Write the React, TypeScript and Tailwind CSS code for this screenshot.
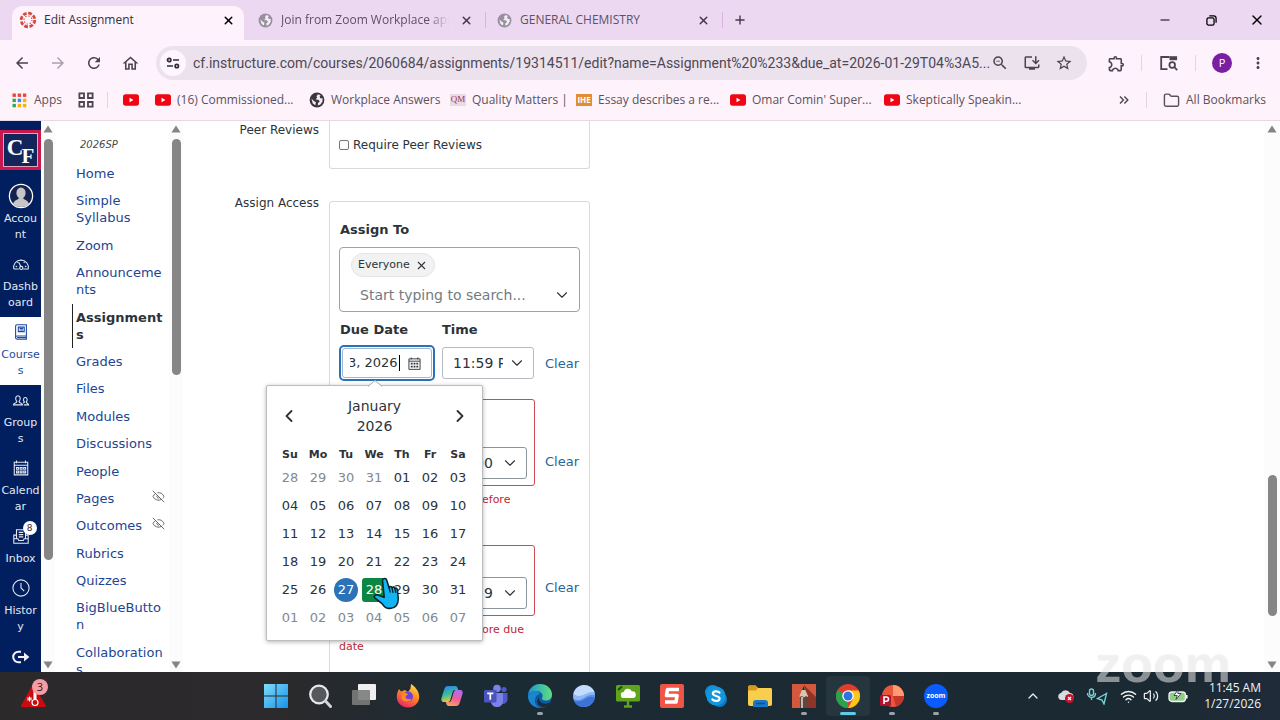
import type { ReactNode } from "react";
import { ChevronDown, ChevronLeft, ChevronRight, ChevronUp, EyeOff, Folder, Minus, Plus, Volume2, Wifi, X } from "lucide-react";
import {
  MdArrowBack,
  MdArrowForward,
  MdInstallDesktop,
  MdMoreVert,
  MdOutlineExtension,
  MdOutlineHome,
  MdRefresh,
  MdStarBorder,
  MdZoomOut,
} from "react-icons/md";

/* ---------- small icons ---------- */

function Globe({ className }: { className: string }) {
  return (
    <svg viewBox="0 0 16 16" className={className}>
      <circle cx="8" cy="8" r="7.4" fill="currentColor" />
      <path
        d="M9 2.2 L7.4 4.2 L8.2 5.6 L6.6 7.4 L9.4 7.8 L10.8 9.6 L9 11 L8.8 13.6 L11.4 12.4 L13.6 9.2 L13.4 6 L11.6 6.4 L10.6 4.8 L11.6 3.2 Z M2.4 6.6 L5 9.2 L6.8 10 L6.4 13.2 L3.8 11.6 Z"
        fill="#f6ecf8"
      />
    </svg>
  );
}

function YouTube() {
  return (
    <svg viewBox="0 0 16 16" className="size-4 shrink-0">
      <rect x="0" y="2.3" width="16" height="11.4" rx="2.6" fill="#f00514" />
      <path d="M6.5 5.8 L10.4 8 L6.5 10.2 Z" fill="#fff" />
    </svg>
  );
}

function CanvasRing() {
  return (
    <svg viewBox="0 0 18 18" className="size-[18px] shrink-0" fill="none" stroke="#d5483c">
      <circle cx="9" cy="9" r="6.8" strokeWidth="2.8" strokeDasharray="3.74 1.6" />
      <circle cx="9" cy="9" r="4" strokeWidth="1.2" strokeDasharray="1.2 1.94" />
    </svg>
  );
}

function AppsGrid() {
  const colors = ["#e04a3a", "#e04a3a", "#e04a3a", "#35a853", "#4285f4", "#f4b400", "#35a853", "#f4b400", "#f4b400"];
  return (
    <svg viewBox="0 0 15 15" className="size-[15px] shrink-0">
      {colors.map((c, i) => (
        <rect key={i} x={0.5 + (i % 3) * 5.2} y={0.5 + Math.floor(i / 3) * 5.2} width="3.4" height="3.4" fill={c} />
      ))}
    </svg>
  );
}

function FourSquares() {
  return (
    <svg viewBox="0 0 16 16" className="size-4 shrink-0" fill="none" stroke="#4b434f" strokeWidth="1.8">
      <path d="M1.4 1.4h4.6v4.6H1.4zM10 1.4h4.6v4.6H10zM1.4 10h4.6v4.6H1.4zM10 10h4.6v4.6H10z" />
    </svg>
  );
}

function SiteInfo() {
  return (
    <svg viewBox="0 0 14 14" className="size-[14px]" fill="none" stroke="#2f2a33" strokeWidth="1.7">
      <circle cx="3.2" cy="4" r="1.7" />
      <path d="M7 4h6M1 10h6" />
      <circle cx="10.8" cy="10" r="1.7" />
    </svg>
  );
}

function LensPanel() {
  return (
    <svg viewBox="0 0 20 18" className="h-[18px] w-5" fill="none" stroke="#4b434f" strokeWidth="1.8">
      <path d="M8.500 15.200H2.200V3h8.300" />
      <path d="M10.500 2.200h7.600v4h-7.600z" fill="#4b434f" stroke="none" />
      <circle cx="13.200" cy="11" r="2.800" />
      <path d="M15.200 13l3 3.200" />
    </svg>
  );
}

function Triangle({ up }: { up?: boolean }) {
  return (
    <svg viewBox="0 0 10 8" className="h-2 w-[10px] shrink-0">
      <path d={up ? "M5 0.4 L9.6 7.4 H0.4 Z" : "M5 7.4 L9.6 0.4 H0.4 Z"} fill="#858585" />
    </svg>
  );
}

function ScrollBar({ width, thumb }: { width: string; thumb: string }) {
  return (
    <div className={`flex shrink-0 flex-col items-center bg-[#fcfcfc] pt-1 pb-[3px] ${width}`}>
      <Triangle up />
      <div className="flex-1">
        <div className={thumb} />
      </div>
      <Triangle />
    </div>
  );
}

/* ---------- browser chrome ---------- */

function TabStrip() {
  return (
    <div className="flex h-10 items-stretch bg-[#ecd9f1] text-[12px] text-[#5d5165]">
      <div className="ml-3 mt-[6px] flex w-[232px] items-center rounded-t-[10px] bg-[#fef3fd] pl-[7px] pr-[9px] pb-[6px] text-[#34303a]">
        <CanvasRing />
        <span className="ml-[7px] flex-1">Edit Assignment</span>
        <button aria-label="Close Edit Assignment">
          <X size={13} strokeWidth={2.8} className="text-black" />
        </button>
      </div>
      <div className="flex w-[241px] items-center pl-[14px] pr-3">
        <Globe className="size-[15px] shrink-0 text-[#98909c]" />
        <span className="ml-2 w-[168px] overflow-hidden whitespace-nowrap [mask-image:linear-gradient(to_right,black_88%,transparent)]">
          Join from Zoom Workplace app
        </span>
        <button aria-label="Close Join from Zoom" className="ml-auto">
          <X size={13} strokeWidth={2.8} className="text-[#463a4d]" />
        </button>
      </div>
      <div className="flex w-[238px] items-center">
        <span className="h-4 w-px bg-[#d8b4e6]" />
        <Globe className="ml-[11px] size-[15px] shrink-0 text-[#98909c]" />
        <span className="ml-2">GENERAL CHEMISTRY</span>
        <button aria-label="Close General Chemistry" className="ml-auto mr-3">
          <X size={13} strokeWidth={2.8} className="text-[#463a4d]" />
        </button>
        <span className="h-4 w-px bg-[#d8b4e6]" />
      </div>
      <button aria-label="New tab" className="ml-[10px]">
        <Plus size={14} strokeWidth={2.4} className="text-[#463a4d]" />
      </button>
      <div className="ml-auto flex text-black">
        <button aria-label="Minimize" className="flex w-[46px] items-center justify-center">
          <Minus size={14} strokeWidth={1.8} />
        </button>
        <button aria-label="Restore" className="flex w-[46px] items-center justify-center">
          <svg viewBox="0 0 12 12" className="size-[11px]" fill="none" stroke="currentColor" strokeWidth="1.4">
            <rect x="1" y="3.2" width="7.8" height="7.8" rx="1.8" />
            <path d="M3.6 1h4.8a2.6 2.6 0 0 1 2.6 2.6v4.8" />
          </svg>
        </button>
        <button aria-label="Close window" className="flex w-[46px] items-center justify-center">
          <X size={16} strokeWidth={2} />
        </button>
      </div>
    </div>
  );
}

function Toolbar() {
  return (
    <div className="flex h-[46px] items-center bg-[#fef3fd] pr-[13px] text-[#4b434f]">
      <nav className="flex w-[156px] shrink-0 gap-[18px] pl-[13px]">
        <button aria-label="Back"><MdArrowBack size={18} /></button>
        <button aria-label="Forward"><MdArrowForward size={18} className="text-[#aaa1ae]" /></button>
        <button aria-label="Reload"><MdRefresh size={18} /></button>
        <button aria-label="Home"><MdOutlineHome size={19} /></button>
      </nav>
      <div className="flex h-[34px] flex-1 items-center rounded-full bg-[#ebe2ee] pl-1 pr-[14px]">
        <button aria-label="Site information" className="flex size-[26px] shrink-0 items-center justify-center rounded-full bg-[#fdf6fe]">
          <SiteInfo />
        </button>
        <input
          aria-label="Address"
          readOnly
          className="ml-[7px] min-w-0 flex-1 bg-transparent font-[Roboto,sans-serif] text-[14px] text-[#4f4755] outline-none"
          value="cf.instructure.com/courses/2060684/assignments/19314511/edit?name=Assignment%20%233&due_at=2026-01-29T04%3A5..."
        />
        <div className="flex shrink-0 gap-[14px]">
          <button aria-label="Zoom out"><MdZoomOut size={18} /></button>
          <button aria-label="Install"><MdInstallDesktop size={18} /></button>
          <button aria-label="Bookmark"><MdStarBorder size={18} /></button>
        </div>
      </div>
      <div className="ml-5 flex shrink-0 items-center">
        <button aria-label="Extensions"><MdOutlineExtension size={19} /></button>
        <span className="ml-[15px] h-4 w-px bg-[#e5d3ea]" />
        <button aria-label="Search with lens" className="ml-[17px]"><LensPanel /></button>
        <span className="ml-4 h-4 w-px bg-[#e5d3ea]" />
        <button className="ml-4 flex size-5 items-center justify-center rounded-full bg-[#7a1fa2] text-[11px] text-white">P</button>
        <button aria-label="Menu" className="ml-[17px]"><MdMoreVert size={18} /></button>
      </div>
    </div>
  );
}

const bookmarks: { label: string; width: string; icon: ReactNode }[] = [
  { label: "(16) Commissioned...", width: "w-[154px]", icon: <YouTube /> },
  { label: "Workplace Answers", width: "w-[141px]", icon: <Globe className="size-4 shrink-0 text-[#3a363c]" /> },
  {
    label: "Quality Matters |",
    width: "w-[126px]",
    icon: <span className="flex h-3 w-4 shrink-0 items-center justify-center bg-[#e7dce4] font-['Liberation_Serif',serif] text-[9px] text-[#a23350]">QM</span>,
  },
  {
    label: "Essay describes a re...",
    width: "w-[154px]",
    icon: <span className="flex h-3 w-4 shrink-0 items-center justify-center bg-[#e08d33] text-[8px] font-bold text-white">IHE</span>,
  },
  { label: "Omar Comin' Super...", width: "w-[154px]", icon: <YouTube /> },
  { label: "Skeptically Speakin...", width: "w-[154px]", icon: <YouTube /> },
];

function BookmarkBar() {
  return (
    <div className="flex h-[35px] items-center border-b border-[#e6d9e6] bg-[#fef3fb] pb-[6px] pl-3 pr-[14px] text-[12px] text-[#5a525e]">
      <a href="#" className="flex w-[66px] shrink-0 items-center gap-[7px]">
        <AppsGrid />
        Apps
      </a>
      <a href="#" aria-label="Tab groups" className="shrink-0">
        <FourSquares />
      </a>
      <span className="ml-[13px] h-4 w-px shrink-0 bg-[#e5d3ea]" />
      <a href="#" aria-label="YouTube" className="ml-[15px] mr-4 shrink-0">
        <YouTube />
      </a>
      {bookmarks.map((b) => (
        <a key={b.label} href="#" className={`flex shrink-0 items-center gap-[6px] whitespace-nowrap ${b.width}`}>
          {b.icon}
          {b.label}
        </a>
      ))}
      <button aria-label="More bookmarks" className="ml-auto">
        <svg viewBox="0 0 10 8" className="h-2 w-[10px]" fill="none" stroke="#4b434f" strokeWidth="1.4">
          <path d="M1 0.6 4.4 4 1 7.4M5.4 0.6 8.8 4 5.4 7.4" />
        </svg>
      </button>
      <span className="ml-[17px] h-4 w-px bg-[#e5d3ea]" />
      <a href="#" className="ml-4 flex items-center gap-[6px] whitespace-nowrap">
        <Folder size={17} />
        All Bookmarks
      </a>
    </div>
  );
}

/* ---------- canvas navigation ---------- */

function LineIcon({ children }: { children: ReactNode }) {
  return (
    <svg viewBox="0 0 20 20" className="size-[18px]" fill="none" stroke="currentColor" strokeWidth="1.2">
      {children}
    </svg>
  );
}

const globalNav: { lines: string[]; active?: boolean; badge?: string; icon: ReactNode }[] = [
  {
    lines: ["Accou", "nt"],
    icon: (
      <svg viewBox="0 0 26 26" className="size-[26px]">
        <circle cx="13" cy="13" r="11.6" fill="#14224f" stroke="#fff" strokeWidth="1.3" />
        <ellipse cx="13" cy="10" rx="4.6" ry="5.6" fill="#c6c6c6" />
        <path d="M5 21 C6 17 10 17 11 15 H15 C16 17 20 17 21 21 C17 25 9 25 5 21 Z" fill="#c6c6c6" />
      </svg>
    ),
  },
  {
    lines: ["Dashb", "oard"],
    icon: (
      <LineIcon>
        <path d="M2 15.5 A8.2 8.2 0 1 1 18 15.5 H12.5 M2 15.5 H7.5" />
        <circle cx="10.3" cy="14.4" r="1.8" />
        <path d="M9.6 12.6 7.6 8.4M4 12.5l1.6.4M6 7.8l1 1M10 5.2v1.6M14 7.8l-1 1M16 12.5l-1.6.4" />
      </LineIcon>
    ),
  },
  {
    lines: ["Course", "s"],
    active: true,
    icon: (
      <LineIcon>
        <path d="M4 16.2V3.6A1.6 1.6 0 0 1 5.6 2H16v12.5H5.6a1.7 1.7 0 0 0 0 3.4H16v-3.4M7 4.6h6.6v5H7zM8.4 6.2h4M8.4 7.8h4M5.6 16.2H16" />
      </LineIcon>
    ),
  },
  {
    lines: ["Group", "s"],
    icon: (
      <LineIcon>
        <path d="M1.6 15.4c0-2.6 3.8-1.6 3.8-3.8-2-2-1.8-6.4 1.2-6.4s3.2 4.4 1.2 6.4c0 2.2 3.8 1.2 3.8 3.8z" />
        <path d="M13.2 15.4h5.2c0-2.2-2.6-1.6-2.6-3.2 1.6-1.4 1.4-5-1-5s-2.6 3.6-1 5c0 .8-.8 1-1.6 1.2" />
      </LineIcon>
    ),
  },
  {
    lines: ["Calend", "ar"],
    icon: (
      <LineIcon>
        <path d="M2.5 3.6h15v14h-15zM2.5 7h15M5 1.6v3M15 1.6v3M5 9.4h2.2v2H5zM9 9.4h2.2v2H9zM13 9.4h2.2v2H13zM5 13.4h2.2v2H5zM9 13.4h2.2v2H9zM13 13.4h2.2v2H13z" />
      </LineIcon>
    ),
  },
  {
    lines: ["Inbox"],
    badge: "8",
    icon: (
      <LineIcon>
        <path d="M5 13V3h10v10M5 9H2v9h16V9h-3M2 13h4.5l1 2h5l1-2H18M7.5 6h5M7.5 8.5h5M7.5 11h5" />
      </LineIcon>
    ),
  },
  {
    lines: ["Histor", "y"],
    icon: (
      <LineIcon>
        <circle cx="10" cy="10" r="9" />
        <path d="M10 4.5V10l3.6 3.6" />
      </LineIcon>
    ),
  },
];

function GlobalNav() {
  return (
    <nav className="flex w-[41px] shrink-0 flex-col overflow-hidden bg-[#011f5f] font-['DejaVu_Sans',Verdana,sans-serif] text-[11px] leading-4 text-[#e3e8f2]">
      <a
        href="#"
        aria-label="College home"
        className="mb-[11px] mt-[9px] flex h-10 shrink-0 items-center justify-center border-[3px] border-[#c9184d] bg-[#13255b] font-['Liberation_Serif',serif] font-bold text-white outline outline-1 -outline-offset-4 outline-[#e6a5bb]"
      >
        <span className="pb-1 text-[23px]">C</span>
        <span className="-ml-[2px] pt-3 text-[21px]">F</span>
      </a>
      {globalNav.map((item) => (
        <a
          key={item.lines[0]}
          href="#"
          className={`flex shrink-0 flex-col items-center pb-[6px] pt-[3px] text-center ${item.active ? "bg-white text-[#1c4ba0]" : ""}`}
        >
          <span className="relative mb-[3px] flex h-6 items-center">
            {item.icon}
            {item.badge && (
              <span className="absolute -right-[7px] -top-[3px] flex size-[14px] items-center justify-center rounded-full bg-white text-[9px] text-[#333]">
                {item.badge}
              </span>
            )}
          </span>
          {item.lines.map((l) => (
            <span key={l}>{l}</span>
          ))}
        </a>
      ))}
      <button aria-label="Expand navigation" className="flex h-8 shrink-0 items-center justify-center">
        <svg viewBox="0 0 18 14" className="h-[14px] w-[18px]" fill="none" stroke="#f0f2f8" strokeWidth="2">
          <path d="M9 1.8H6.4a5.2 5.2 0 0 0 0 10.4H9M6 7h8" />
          <path d="M12 2.6 17.4 7 12 11.4Z" fill="#f0f2f8" stroke="none" />
        </svg>
      </button>
    </nav>
  );
}

const courseLinks: { lines: string[]; active?: boolean; hidden?: boolean }[] = [
  { lines: ["Home"] },
  { lines: ["Simple", "Syllabus"] },
  { lines: ["Zoom"] },
  { lines: ["Announceme", "nts"] },
  { lines: ["Assignment", "s"], active: true },
  { lines: ["Grades"] },
  { lines: ["Files"] },
  { lines: ["Modules"] },
  { lines: ["Discussions"] },
  { lines: ["People"] },
  { lines: ["Pages"], hidden: true },
  { lines: ["Outcomes"], hidden: true },
  { lines: ["Rubrics"] },
  { lines: ["Quizzes"] },
  { lines: ["BigBlueButto", "n"] },
  { lines: ["Collaboration", "s"] },
];

function CourseNav() {
  return (
    <aside className="w-[114px] shrink-0 overflow-hidden pl-[17px] pt-4 font-['DejaVu_Sans',Verdana,sans-serif]">
      <p className="pl-2 text-[10px] italic leading-4 text-[#4a4a4a]">2026SP</p>
      <ul className="mt-3 flex h-[513px] flex-col justify-between text-[13px] leading-[17px] text-[#1d4593]">
        {courseLinks.map((item) => (
          <li key={item.lines[0]} className="flex items-start justify-between pr-1">
            <a
              href="#"
              className={
                item.active
                  ? "-my-[5px] flex flex-col border-l border-[#222] py-[5px] pl-[3px] font-bold text-[#2d3339]"
                  : "flex flex-col pl-1"
              }
            >
              {item.lines.map((l) => (
                <span key={l}>{l}</span>
              ))}
            </a>
            {item.hidden && <EyeOff size={13} strokeWidth={1.6} className="text-[#555]" />}
          </li>
        ))}
      </ul>
    </aside>
  );
}

/* ---------- date picker ---------- */

const weekdays = ["Su", "Mo", "Tu", "We", "Th", "Fr", "Sa"];
const weeks = [
  ["28", "29", "30", "31", "01", "02", "03"],
  ["04", "05", "06", "07", "08", "09", "10"],
  ["11", "12", "13", "14", "15", "16", "17"],
  ["18", "19", "20", "21", "22", "23", "24"],
  ["25", "26", "27", "28", "29", "30", "31"],
  ["01", "02", "03", "04", "05", "06", "07"],
];

function dayClass(row: number, col: number) {
  if (row === 4 && col === 2) return "size-6 rounded-full bg-[#2b72b8] text-white";
  if (row === 4 && col === 3) return "size-6 rounded-[3px] bg-[#0b8743] text-white";
  if ((row === 0 && col < 4) || row === 5) return "size-6 text-[#83898e]";
  return "size-6 text-[#2d3339]";
}

function HandCursor() {
  return (
    <svg viewBox="0 0 26 33" className="absolute left-[106px] top-[191px] h-[33px] w-[26px]">
      <path
        d="M9.5 3.4C9.8 1 13.2 1 13.8 3.2L16 10.500C16.700 9 18.400 9.200 19 10.800C19.800 9.600 21.400 9.900 21.900 11.400C22.800 10.700 24 11.200 24.300 12.600L25.200 20.500C25.500 26 23.500 30.500 18 31.300C13.500 31.800 11 30 9.300 26.800L1.800 20.800C.6 19.200 2.400 17.400 4.600 18L11.200 20.200Z"
        fill="#12b4f2"
        stroke="#06202c"
        strokeWidth="1.5"
        strokeLinejoin="round"
      />
      <path d="M16 10.500l1.300 5M19 10.800l1.100 5M21.900 11.400l.9 4.500" stroke="#06202c" strokeWidth="1.3" fill="none" />
    </svg>
  );
}

function Calendar() {
  return (
    <div className="absolute -left-[73px] top-10 z-10 w-[217px] rounded-[2px] border border-[#bdbdbd] bg-white px-[9px] pb-2 pt-[10px] shadow-[0_1px_4px_rgba(0,0,0,0.3)]">
      <svg viewBox="0 0 14 7" className="absolute -top-[6px] left-[101px] h-[7px] w-[14px]">
        <path d="M0 6.5 7 .5l7 6" fill="#fff" stroke="#aaa" />
      </svg>
      <div className="flex items-center justify-between px-[3px] text-[14px] leading-5 text-[#2d3339]">
        <button aria-label="Previous month">
          <ChevronLeft size={20} strokeWidth={2.2} />
        </button>
        <span className="text-center">
          January
          <br />
          2026
        </span>
        <button aria-label="Next month">
          <ChevronRight size={20} strokeWidth={2.2} />
        </button>
      </div>
      <table className="mt-[10px] table-fixed border-collapse">
        <thead>
          <tr className="h-[18px] text-[11px] leading-4 text-[#2d3339]">
            {weekdays.map((d) => (
              <th key={d} className="w-7 p-0">
                {d}
              </th>
            ))}
          </tr>
        </thead>
        <tbody>
          {weeks.map((week, row) => (
            <tr key={row} className="h-7">
              {week.map((day, col) => (
                <td key={col} className="p-0 text-center">
                  <button className={`text-[13px] leading-6 ${dayClass(row, col)}`}>{day}</button>
                </td>
              ))}
            </tr>
          ))}
        </tbody>
      </table>
      <HandCursor />
    </div>
  );
}

/* ---------- assignment form ---------- */

function ClearButton({ className }: { className: string }) {
  return <button className={`ml-auto pr-px text-[13px] leading-4 text-[#2b6494] ${className}`}>Clear</button>;
}

type DateErrorProps = { id: string; value: string; box: string; clear: string; text: string; last?: string };

function DateError({ id, value, box, clear, text, last }: DateErrorProps) {
  return (
    <div>
      <div className="flex items-end">
        <div className={`flex w-[196px] items-end justify-end rounded-[3px] border border-[#cf4a52] pb-[6px] pr-[7px] ${box}`}>
          <div className="flex h-8 w-[92px] items-center rounded-[3px] border border-[#8d959c] pl-[39px] pr-[7px]">
            <input id={id} aria-label="Time" readOnly value={value} className="w-[24px] text-[14px] text-[#2d3339] outline-none" />
            <ChevronDown size={18} strokeWidth={1.5} className="ml-auto shrink-0" />
          </div>
        </div>
        <ClearButton className={clear} />
      </div>
      <p className="pt-[5px] text-[11px] leading-[17px] text-[#c02730]">
        <span className="block pl-[143px]">{text}</span>
        {last}
      </p>
    </div>
  );
}

function AssignForm() {
  return (
    <main className="grid min-w-0 flex-1 auto-rows-max grid-cols-[136px_261px] gap-x-[10px] overflow-hidden font-['DejaVu_Sans',Verdana,sans-serif] text-[12px] leading-4 text-[#2d3339]">
      <span className="pt-px text-right">Peer Reviews</span>
      <div className="h-12 rounded-b-[3px] border border-t-0 border-[#dadada] px-[9px] pt-4">
        <label className="flex items-center gap-1">
          <input type="checkbox" className="size-[10px] appearance-none rounded-[2px] border border-[#777] bg-white" />
          Require Peer Reviews
        </label>
      </div>

      <span className="pt-[26px] text-right">Assign Access</span>
      <div className="mt-8 rounded-[3px] border border-[#dadada] px-[9px] pb-10 pt-5">
        <label htmlFor="assignTo" className="block pl-px text-[13px] font-bold">
          Assign To
        </label>
        <div className="mt-[9px] h-[65px] rounded-[4px] border border-[#9ba2a8] pl-[11px] pr-2 pt-[5px]">
          <span className="inline-flex h-6 items-center gap-[5px] rounded-full border border-[#e4e4e4] bg-[#f2f2f2] px-[6px] text-[11px]">
            Everyone
            <button aria-label="Remove Everyone">
              <X size={13} strokeWidth={2} />
            </button>
          </span>
          <div className="flex items-center pl-[9px] pt-2">
            <input
              id="assignTo"
              placeholder="Start typing to search..."
              className="h-5 min-w-0 flex-1 text-[14px] outline-none placeholder:text-[#737b82]"
            />
            <ChevronDown size={18} strokeWidth={1.5} />
          </div>
        </div>

        <div className="mt-[10px] flex pl-px text-[13px] font-bold">
          <label htmlFor="dueDate" className="w-[102px]">
            Due Date
          </label>
          <label htmlFor="dueTime">Time</label>
        </div>
        <div className="mt-[7px] flex items-center">
          <div className="relative">
            <div className="h-9 w-[96px] rounded-[5px] border-2 border-[#2b72b8] p-px">
              <div className="flex h-full items-center rounded-[3px] border border-[#9cbad4] pl-[7px] pr-[10px]">
                <div className="flex w-[49px] justify-end overflow-hidden">
                  <input id="dueDate" readOnly value="3, 2026" className="w-[51px] shrink-0 text-[13px] outline-none" />
                </div>
                <span className="h-4 w-px bg-black" />
                <button aria-label="Open calendar" className="ml-auto shrink-0">
                  <svg viewBox="0 0 14 14" className="size-[13px]" fill="none" stroke="#2d3339">
                    <path d="M1 2h12v11.3H1zM1 4.5h12M3.5.5v2M10.5.5v2" />
                    <path d="M3 7.2h8M3 10.4h8" strokeWidth="2" strokeDasharray="2 1" />
                  </svg>
                </button>
              </div>
            </div>
            <Calendar />
          </div>
          <div className="ml-[7px] flex h-8 w-[92px] items-center rounded-[3px] border border-[#b4bac0] pl-[10px] pr-[7px]">
            <input id="dueTime" readOnly value="11:59 PM" className="w-[50px] text-[14px] outline-none" />
            <ChevronDown size={18} strokeWidth={1.5} className="ml-auto shrink-0" />
          </div>
          <ClearButton className="mt-[2px]" />
        </div>

        <div className="mt-[18px] flex flex-col gap-[37px]">
          <DateError id="fromTime" value="00" box="h-[87px]" clear="mb-4" text="efore" />
          <DateError id="untilTime" value="59" box="h-[71px]" clear="mb-5" text="ore due" last="date" />
        </div>
      </div>
    </main>
  );
}

/* ---------- taskbar ---------- */

const apps: { name: string; running?: boolean; active?: boolean; icon: ReactNode }[] = [
  {
    name: "Start",
    icon: (
      <>
        <defs>
          <linearGradient id="win" x1="0" y1="0" x2="1" y2="1">
            <stop offset="0" stopColor="#7fdcfb" />
            <stop offset="1" stopColor="#1593e8" />
          </linearGradient>
        </defs>
        <path d="M0 0h11.5v11.5H0zM12.5 0H24v11.5H12.5zM0 12.5h11.5V24H0zM12.5 12.5H24V24H12.5z" fill="url(#win)" />
      </>
    ),
  },
  {
    name: "Search",
    icon: (
      <>
        <circle cx="11" cy="10.5" r="8.8" fill="#55595e" stroke="#e9e9ea" strokeWidth="2.2" />
        <path d="M17.5 17l5 5.5" stroke="#d5d5d5" strokeWidth="3" strokeLinecap="round" />
      </>
    ),
  },
  {
    name: "Task view",
    icon: (
      <>
        <rect x="6" y="0" width="18" height="16" rx="1" fill="#efefef" />
        <rect x="0" y="6" width="18" height="15" rx="1" fill="#7b7b7b" opacity=".9" />
      </>
    ),
  },
  {
    name: "Firefox",
    icon: (
      <>
        <defs>
          <linearGradient id="fox" x1=".8" y1="0" x2=".3" y2="1">
            <stop offset="0" stopColor="#ffe14a" />
            <stop offset=".45" stopColor="#ff8a1e" />
            <stop offset="1" stopColor="#e8246b" />
          </linearGradient>
        </defs>
        <path d="M3 5l2 2.5L9 6l3 2 2.500-3.500L15 0c4 2.500 8 7 8.200 12.500C23.500 19 18 23.500 12 23.500S.8 19 .8 13c0-3 .8-6 2.200-8z" fill="url(#fox)" />
        <circle cx="12" cy="12.5" r="5" fill="#7440d8" />
        <path d="M6 10c2-1.500 5-1 6 .5-1.500.5-2 1.500-2.500 2.500 0 2 3 3 6 1.500-1 3.500-8 4.500-10 0z" fill="#ff8b25" />
      </>
    ),
  },
  {
    name: "Copilot",
    icon: (
      <>
        <defs>
          <linearGradient id="cpa" x1="0" y1="0" x2=".3" y2="1">
            <stop offset="0" stopColor="#2f7df5" />
            <stop offset=".6" stopColor="#35c29a" />
            <stop offset="1" stopColor="#f0c23a" />
          </linearGradient>
          <linearGradient id="cpb" x1=".6" y1="0" x2=".3" y2="1">
            <stop offset="0" stopColor="#b06bf5" />
            <stop offset=".5" stopColor="#ed5d9d" />
            <stop offset="1" stopColor="#f9a25a" />
          </linearGradient>
        </defs>
        <path d="M8 2h7c2 0 2.600 1.500 3.200 4h-3c-2 0-2.500 1.500-3 3.500l-2 6.500c-.5 1.500-1.500 2-3 2H4c-3 0-3-2.500-2.200-5l2.400-7.500C5 3 6 2 8 2z" fill="url(#cpa)" />
        <path d="M16 22H9c-2 0-2.600-1.500-3.200-4h3c2 0 2.500-1.500 3-3.500l2-6.500c.5-1.500 1.500-2 3-2H20c3 0 3 2.500 2.200 5l-2.400 7.500C19 21 18 22 16 22z" fill="url(#cpb)" />
      </>
    ),
  },
  {
    name: "Teams",
    icon: (
      <>
        <circle cx="13" cy="4.5" r="3.8" fill="#7b83eb" />
        <circle cx="20" cy="5.5" r="2.6" fill="#5059c9" />
        <path d="M15 9h8.500v6c0 4-3 5-5 5z" fill="#5059c9" />
        <path d="M7 9h12v8c0 4-3 6-6 6s-6-2-6-6z" fill="#7b83eb" />
        <rect x="0" y="6" width="12.5" height="12.5" rx="1.2" fill="#4b53bc" />
        <path d="M3.2 9.300h6.200M6.300 9.300v6.400" stroke="#fff" strokeWidth="1.7" />
      </>
    ),
  },
  {
    name: "Edge",
    running: true,
    icon: (
      <>
        <defs>
          <linearGradient id="edg" x1="0" y1=".3" x2="1" y2=".3">
            <stop offset="0" stopColor="#1d93d6" />
            <stop offset="1" stopColor="#5fe07a" />
          </linearGradient>
        </defs>
        <circle cx="12" cy="12" r="12" fill="#0f59a4" />
        <path d="M0 11C1 4 6 0 12 0c7 0 12 5 12 10.500 0 4-3 6-6 6-3.500 0-4.500-1.500-4-2.500C16 11 13 7 8.500 7 4 7 1 9 0 11z" fill="url(#edg)" />
        <path d="M8.500 7C4 7 1 9 0 12c0 7 6 12 12 12-5-2-6.500-7-4-11.500 1-1.500 2.500-2.500 4-2.500-1-2-2-3-3.500-3z" fill="#1b86d0" />
        <path d="M11 13c-1 4 3 7.500 8 6.500 1-.2 2.500-1 3-.5-1 .5-3 3.500-6 4-5 0-9-4-5-10z" fill="#1c2b33" />
      </>
    ),
  },
  {
    name: "Globe",
    icon: (
      <>
        <circle cx="12" cy="12" r="11" fill="#5a93ea" />
        <path d="M2 8C4 3 9 1 12 1c5 0 9 3 10.500 7-4 .5-6 1-9 3S6 14 1.500 10z" fill="#c3dcfb" />
        <path d="M1.200 10c4 3 8 2 11 .5s6-3 10.300-2.500l.4 3C18 10 15 12 12 14s-7 3-10.500 1z" fill="#8db8f6" />
        <path d="M2 17c4 1 7 .5 10-1.500s6-4 10.800-2C22.500 19 17 23 12 23s-8-2-10-6z" fill="#3d72d6" />
      </>
    ),
  },
  {
    name: "Cloud desktop",
    icon: (
      <>
        <rect x="0" y="1" width="24" height="16.5" rx="1.5" fill="#5ea51b" />
        <path d="M12 17v5M8 22.500h8" stroke="#5ea51b" strokeWidth="2.4" />
        <path d="M2 6l4-3.500" stroke="#1f4a08" strokeWidth="2" />
        <path d="M8 14a3 3 0 0 1-.3-6 4.300 4.300 0 0 1 8.200-.6A3.300 3.300 0 0 1 17 14z" fill="#fff" />
      </>
    ),
  },
  {
    name: "Snagit",
    icon: (
      <>
        <rect width="24" height="24" rx="2" fill="#ee5546" />
        <path d="M19 5.500H7.500l-1 6H17l-1 6.500H5" fill="none" stroke="#fff" strokeWidth="3.6" strokeLinejoin="round" />
      </>
    ),
  },
  {
    name: "Skype",
    icon: (
      <>
        <rect x="1" y="1" width="15" height="15" rx="7.5" fill="#0f8fd8" />
        <rect x="8" y="8" width="15" height="15" rx="7.5" fill="#0b7cc7" />
        <circle cx="12" cy="12" r="9.6" fill="#1296dc" />
        <path d="M15.500 8.600C14 7 8.800 6.800 8.800 9.600c0 3 6.800 1.800 6.800 5 0 3-5.600 3-7.200.8" fill="none" stroke="#fff" strokeWidth="2.2" strokeLinecap="round" />
      </>
    ),
  },
  {
    name: "File Explorer",
    icon: (
      <>
        <path d="M0 3.500C0 2 .8 1.500 2 1.500h5.500L10 4h12.500c1 0 1.500.6 1.500 1.500V20c0 1-.6 2-2 2H2c-1.200 0-2-.8-2-2z" fill="#f9cd4d" />
        <path d="M0 3.500C0 2 .8 1.500 2 1.500h5.500L10 4 8 6.500H0z" fill="#d99a1c" />
        <path d="M5 23v-4c0-2 1-3 3-3h9c2 0 3 1 3 3v4z" fill="#1978c8" />
        <path d="M8 19.500h9" stroke="#0e4f8c" strokeWidth="1.5" />
      </>
    ),
  },
  {
    name: "Sketchbook",
    running: true,
    icon: (
      <>
        <rect width="24" height="24" fill="#d4583d" />
        <path d="M12 1l12 12v11H14z" fill="#8f3527" />
        <path d="M11.500 2L16 12v12H7.500V12z" fill="#dcc5ae" />
        <path d="M11.500 2l1.500 4h-3z" fill="#222" />
        <path d="M7.500 13l2.500-1 2 1.500 2-1.500 2 1v11H7.500z" fill="#5d4743" />
        <path d="M10 13v11" stroke="#c9b6a8" strokeWidth="2" />
      </>
    ),
  },
  {
    name: "Chrome",
    active: true,
    icon: (
      <>
        <circle cx="12" cy="12" r="12" fill="#e23c2e" />
        <path d="M1.600 6L12 12l0 12A12 12 0 0 1 1.600 6z" fill="#2ba24c" />
        <path d="M12 6.500h10.700A12 12 0 0 1 12 24l5-9z" fill="#fcc61a" />
        <circle cx="12" cy="12" r="5.8" fill="#fff" />
        <circle cx="12" cy="12" r="4.5" fill="#2f72e4" />
      </>
    ),
  },
  {
    name: "PowerPoint",
    running: true,
    icon: (
      <>
        <circle cx="13" cy="12" r="11" fill="#e9573a" />
        <path d="M13 1a11 11 0 0 1 11 11H13z" fill="#ff9a72" />
        <path d="M24 12a11 11 0 0 1-8 10.500L13 12z" fill="#c8352b" />
        <rect x="0" y="11" width="11" height="11" rx="1.5" fill="#b3122c" />
        <path d="M4 20v-7h2.400a2.100 2.100 0 0 1 0 4.200H4" fill="none" stroke="#fff" strokeWidth="1.6" />
      </>
    ),
  },
  {
    name: "Zoom",
    running: true,
    icon: (
      <>
        <circle cx="12" cy="12" r="12" fill="#0b5cff" />
        <text x="12" y="14" textAnchor="middle" fontSize="7" fontWeight="bold" fill="#fff">
          zoom
        </text>
      </>
    ),
  },
];

function Taskbar() {
  return (
    <footer className="flex h-12 shrink-0 bg-[linear-gradient(to_right,#2c292b_0%,#2b2a2c_22%,#1b2b33_36%,#1b2a32_90%,#202a3a_100%)]">
      <div className="flex w-[254px] shrink-0 items-center pl-[21px]">
        <button aria-label="Weather alert" className="relative">
          <svg viewBox="0 0 26 24" className="h-6 w-[26px]">
            <path d="M12 2 L24 22 H1 Z" fill="#c80c12" stroke="#c80c12" strokeWidth="2" strokeLinejoin="round" />
            <path d="M14 6v11" stroke="#fff" strokeWidth="3" strokeLinecap="round" />
            <circle cx="14" cy="18.5" r="3" fill="#c80c12" stroke="#fff" strokeWidth="1.2" />
            <path d="M8.500 12.500v5M6 15h5M6.800 13.300l3.400 3.400M10.200 13.300l-3.400 3.400" stroke="#fff" />
          </svg>
          <span className="absolute -right-[1px] -top-[5px] flex size-4 items-center justify-center rounded-full bg-[#f79ba5] text-[11px] text-[#3a1518]">
            3
          </span>
        </button>
      </div>
      <div className="flex shrink-0">
        {apps.map((a) => (
          <button
            key={a.name}
            aria-label={a.name}
            className={`relative flex w-11 items-center justify-center ${a.active ? "my-1 rounded-[4px] bg-[#26363e]" : ""}`}
          >
            <svg viewBox="0 0 24 24" className="size-6">
              {a.icon}
            </svg>
            {a.running && <span className="absolute bottom-[5px] h-[3px] w-[6px] rounded-full bg-[#9aa2a7]" />}
            {a.active && <span className="absolute bottom-px h-[3px] w-4 rounded-full bg-[#5fcbe8]" />}
          </button>
        ))}
      </div>
      <div className="ml-auto flex items-center pr-[19px] text-[#f0f2f4]">
        <ChevronUp size={16} strokeWidth={1.8} />
        <svg viewBox="0 0 18 16" className="ml-4 h-4 w-[18px]">
          <path d="M4 12a3.600 3.600 0 0 1 0-7 5 5 0 0 1 9 0 3.600 3.600 0 0 1 1 7z" fill="#d9dbdd" />
          <circle cx="12.5" cy="10.5" r="4.5" fill="#c8102e" />
          <path d="M11 9l3 3M14 9l-3 3" stroke="#fff" strokeWidth="1.3" />
        </svg>
        <svg viewBox="0 0 22 18" className="ml-[11px] h-[18px] w-[22px]" fill="none" stroke="#74d3d3" strokeWidth="1.4">
          <rect x="3.5" y="2" width="4" height="6.5" rx="2" />
          <path d="M1.500 6c0 6 8 6 8 0M5.500 10.500v2.500M20.500 6.500l-9 5 4.500 1.500 2 4z" />
        </svg>
        <Wifi size={17} className="ml-3" />
        <Volume2 size={16} strokeWidth={1.8} className="ml-[6px]" />
        <svg viewBox="0 0 20 14" className="ml-[9px] h-[14px] w-5">
          <rect x="1" y="3" width="16.5" height="9.5" rx="3" fill="#8fce86" stroke="#f0f2f4" strokeWidth="1.3" />
          <path d="M18.800 6v3.500" stroke="#f0f2f4" strokeWidth="1.6" />
          <path d="M10.500 0L6 6.500h3.200L8 10.500l5-6H9.800z" fill="#fff" stroke="#1b2b33" strokeWidth=".8" />
        </svg>
        <div className="ml-4 pb-px text-right text-[12px] leading-4">
          11:45 AM
          <br />
          1/27/2026
        </div>
      </div>
    </footer>
  );
}

export default function App() {
  return (
    <div className="relative flex h-screen flex-col overflow-hidden bg-white font-['Open_Sans','Noto_Sans',sans-serif]">
      <header className="shrink-0">
        <TabStrip />
        <Toolbar />
        <BookmarkBar />
      </header>
      <div className="flex min-h-0 flex-1">
        <GlobalNav />
        <ScrollBar width="w-[14px]" thumb="mt-[6px] h-[421px] w-[9px] rounded-full bg-[#868686]" />
        <CourseNav />
        <ScrollBar width="w-[14px]" thumb="mt-[6px] h-[236px] w-[9px] rounded-full bg-[#868686]" />
        <AssignForm />
        <ScrollBar width="w-4" thumb="mt-[342px] h-[141px] w-[9px] rounded-full bg-[#868686]" />
      </div>
      <Taskbar />
      <div className="pointer-events-none absolute bottom-[30px] right-[49px] font-['Liberation_Sans',sans-serif] text-[52px] font-bold leading-[52px] text-white/50 [text-shadow:0_0_1px_rgba(0,0,0,0.12)]">
        zoom
      </div>
    </div>
  );
}
